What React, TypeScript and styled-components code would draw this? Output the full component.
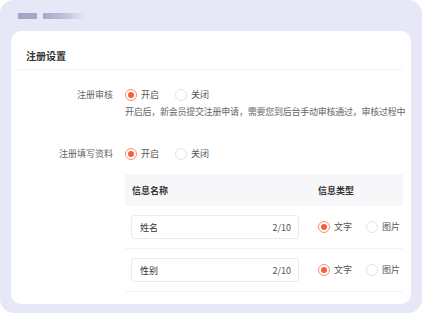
import React from "react";
import styled, { createGlobalStyle } from "styled-components";

const Global = createGlobalStyle`
  html, body { margin: 0; padding: 0; background: #ffffff; }
  body { font-family: "Noto Sans CJK SC", "Noto Sans", sans-serif; }
  * { box-sizing: border-box; }
`;

const Frame = styled.div`
  width: 422px;
  height: 313px;
  background: #e7e8f7;
  border-radius: 14px;
  padding: 13px 11px 9px 11px;
  display: flex;
  flex-direction: column;
  gap: 12px;
  overflow: hidden;
`;

const Bars = styled.div`
  display: flex;
  gap: 6px;
  padding-left: 7px;
  height: 6px;
`;

const Bar = styled.div<{ $w: number; $fade?: boolean }>`
  width: ${(p) => p.$w}px;
  height: 6px;
  background: ${(p) =>
    p.$fade
      ? "linear-gradient(90deg, #a6a8c8 0%, #c4c6de 60%, rgba(231,232,247,0) 100%)"
      : "#a3a6c5"};
`;

const Card = styled.div`
  flex: 1;
  background: #ffffff;
  border-radius: 10px;
  display: flex;
  flex-direction: column;
  overflow: hidden;
`;

const Header = styled.div`
  padding: 18px 15px 6px 8px;
  font-size: 10px;
  line-height: 14px;
  font-weight: 700;
  color: #333333;
  border-bottom: 1px solid #f3f3f6;
  margin: 0 8px 0 7px;
`;

const Body = styled.div`
  padding: 17px 8px 0 0;
  display: flex;
  flex-direction: column;
`;

const FormRow = styled.div<{ $mt?: number }>`
  display: grid;
  grid-template-columns: 102px 278px;
  column-gap: 12px;
  margin-top: ${(p) => p.$mt ?? 0}px;
`;

const Label = styled.div`
  text-align: right;
  font-size: 9px;
  line-height: 16px;
  color: #666666;
  white-space: nowrap;
`;

const Content = styled.div`
  display: flex;
  flex-direction: column;
  min-width: 0;
`;

const RadioGroup = styled.div<{ $gap?: number }>`
  display: flex;
  align-items: center;
  gap: ${(p) => p.$gap ?? 16}px;
  height: 16px;
`;

const RadioItem = styled.label`
  display: flex;
  align-items: center;
  gap: 4px;
  font-size: 9px;
  color: #555555;
  line-height: 12px;
  white-space: nowrap;
`;

const Circle = styled.span<{ $on?: boolean }>`
  width: 12px;
  height: 12px;
  border-radius: 50%;
  border: 1px solid ${(p) => (p.$on ? "#f7906d" : "#e3e3e6")};
  display: flex;
  align-items: center;
  justify-content: center;
  background: #ffffff;
  &::after {
    content: "";
    width: 6px;
    height: 6px;
    border-radius: 50%;
    background: ${(p) => (p.$on ? "#f5603a" : "transparent")};
  }
`;

const Desc = styled.div`
  margin-top: 3px;
  font-size: 9px;
  line-height: 12px;
  letter-spacing: -0.24px;
  color: #666666;
  white-space: nowrap;
`;

const Table = styled.div`
  margin-top: 12px;
  display: flex;
  flex-direction: column;
`;

const HeadRow = styled.div`
  display: grid;
  grid-template-columns: 193px 1fr;
  align-items: center;
  height: 32px;
  background: #f7f7f9;
  font-size: 9px;
  font-weight: 700;
  color: #333333;
  padding-left: 7px;
  & > span:last-child { margin-left: -7px; }
`;

const DataRow = styled.div`
  display: grid;
  grid-template-columns: 193px 1fr;
  align-items: center;
  padding: 9px 0;
  border-bottom: 1px solid #f3f3f6;
  &:first-of-type { padding-top: 8px; }
`;

const InputBox = styled.div`
  margin-left: 6px;
  width: 168px;
  height: 24px;
  border: 1px solid #ececef;
  border-radius: 3px;
  display: flex;
  align-items: center;
  justify-content: space-between;
  padding: 0 7px 0 8px;
  font-size: 9px;
  color: #333333;
`;

const Count = styled.span`
  color: #555555;
`;

const Radio = ({ on, text }: { on?: boolean; text: string }) => (
  <RadioItem>
    <Circle $on={on} />
    {text}
  </RadioItem>
);

const rows = ["姓名", "性别"];

export default function App() {
  return (
    <>
      <Global />
      <Frame>
        <Bars>
          <Bar $w={19} />
          <Bar $w={42} $fade />
        </Bars>
        <Card>
          <Header>注册设置</Header>
          <Body>
            <FormRow>
              <Label>注册审核</Label>
              <Content>
                <RadioGroup>
                  <Radio on text="开启" />
                  <Radio text="关闭" />
                </RadioGroup>
                <Desc>开启后，新会员提交注册申请，需要您到后台手动审核通过，审核过程中</Desc>
              </Content>
            </FormRow>
            <FormRow $mt={28}>
              <Label>注册填写资料</Label>
              <Content>
                <RadioGroup>
                  <Radio on text="开启" />
                  <Radio text="关闭" />
                </RadioGroup>
                <Table>
                  <HeadRow>
                    <span>信息名称</span>
                    <span>信息类型</span>
                  </HeadRow>
                  {rows.map((r) => (
                    <DataRow key={r}>
                      <InputBox>
                        <span>{r}</span>
                        <Count>2/10</Count>
                      </InputBox>
                      <RadioGroup $gap={14}>
                        <Radio on text="文字" />
                        <Radio text="图片" />
                      </RadioGroup>
                    </DataRow>
                  ))}
                </Table>
              </Content>
            </FormRow>
          </Body>
        </Card>
      </Frame>
    </>
  );
}
